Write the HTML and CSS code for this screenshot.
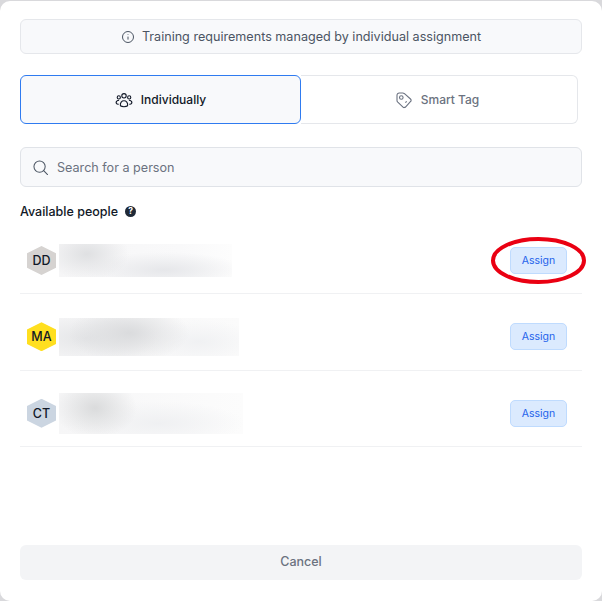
FILE: index.html
```html
<!DOCTYPE html>
<html lang="en">
<head>
    <meta charset="UTF-8">
    <meta name="viewport" content="width=device-width, initial-scale=1.0">
    <title>Assign Training</title>
    <link rel="stylesheet" href="styles.css">
</head>
<body>

<div class="dialog">
    <!-- Notice -->
    <div class="notice">
        <svg class="notice-icon" viewBox="0 0 14 14" fill="none" stroke="#4b5563" stroke-width="1">
            <circle cx="7" cy="7" r="5.5"/>
            <path d="M7 6.600v3M7 4.400v.6"/>
        </svg>
        <span>Training requirements managed by individual assignment</span>
    </div>

    <!-- Tabs -->
    <div class="tabs">
        <div class="tab tab-active">
            <svg class="tab-icon" viewBox="0 0 18 18" fill="none" stroke="#111827" stroke-width="1.100">
                <circle cx="9" cy="4.800" r="2.200"/>
                <circle cx="3.800" cy="6.400" r="1.600"/>
                <circle cx="14.200" cy="6.400" r="1.600"/>
                <path d="M5.400 14.800c-.5-3.400 1.400-5 3.600-5s4.100 1.600 3.600 5c-1.600 1.200-5.600 1.200-7.200 0z"/>
                <path d="M3.600 13.400c-1.500-.2-2.400-.8-2.500-1.500 0-1.400 1-2.500 3-2.600M14.400 13.400c1.500-.2 2.400-.8 2.500-1.500 0-1.400-1-2.500-3-2.600"/>
            </svg>
            <span>Individually</span>
        </div>
        <div class="tab tab-plain">
            <svg class="tab-icon" viewBox="0 0 18 18" fill="none" stroke="#6b7280" stroke-width="1.100">
                <path d="M2 4.200c0-1.200 1-2.200 2.200-2.200h3.500c.7 0 1.300.3 1.800.7l6 5.300c.8.700.8 1.800.1 2.500l-5.100 5.500c-.7.700-1.800.8-2.500.1l-5.200-4.900c-.5-.5-.8-1.100-.8-1.800z"/>
                <circle cx="6.300" cy="6.500" r="1.800"/>
                <path d="M10.400 11.700l1.300-1.300"/>
            </svg>
            <span>Smart Tag</span>
        </div>
    </div>

    <!-- Search -->
    <div class="search">
        <svg class="search-icon" viewBox="0 0 16 16" fill="none" stroke="#4b5563" stroke-width="1.100" stroke-linecap="round">
            <circle cx="7" cy="7" r="6"/>
            <path d="M11.400 11.400l4.100 4.100"/>
        </svg>
        <span>Search for a person</span>
    </div>

    <div class="section-title">
        <span>Available people</span>
        <span class="help">?</span>
    </div>

    <!-- People -->
    <div class="people">
        <div class="person">
            <div class="avatar avatar-grey">DD</div>
            <div class="blurred blurred-one"></div>
            <button class="assign">Assign</button>
        </div>
        <div class="person">
            <div class="avatar avatar-yellow">MA</div>
            <div class="blurred blurred-two"></div>
            <button class="assign">Assign</button>
        </div>
        <div class="person">
            <div class="avatar avatar-blue">CT</div>
            <div class="blurred blurred-three"></div>
            <button class="assign">Assign</button>
        </div>
    </div>

    <button class="cancel">Cancel</button>

    <!-- Red annotation around the first button -->
    <svg class="annotation" width="100" height="50" viewBox="0 0 100 50" fill="none">
        <ellipse cx="49.500" cy="23.500" rx="45.500" ry="21.500" stroke="#ea0012" stroke-width="4"/>
    </svg>
</div>

</body>
</html>
```

FILE: styles.css
```css
/* Page behind the dialog */
body {
    margin: 0;
    padding: 0;
    width: 602px;
    height: 601px;
    overflow: hidden;
    background: #d9d9dc;
    font-family: Inter, 'Noto Sans', sans-serif;
}

.dialog {
    position: relative;
    box-sizing: border-box;
    width: 602px;
    height: 600px;
    margin-top: 1px;
    padding: 18px 20px 0;
    background: #fff;
    border-radius: 10px;
    display: flex;
    flex-direction: column;
}

/* Notice */
.notice {
    box-sizing: border-box;
    height: 35px;
    display: flex;
    align-items: center;
    justify-content: center;
    gap: 7px;
    background: #f8f9fb;
    border: 1px solid #e5e7eb;
    border-radius: 6px;
    color: #4b5563;
    font-size: 12.600px;
}

.notice-icon {
    width: 14px;
    height: 14px;
}

/* Tabs */
.tabs {
    display: flex;
    width: 558px;
    height: 49px;
    margin-top: 21px;
}

.tab {
    box-sizing: border-box;
    flex: 1;
    display: flex;
    align-items: center;
    justify-content: center;
    gap: 8px;
    border: 1px solid #e5e7eb;
    border-left: none;
    border-radius: 0 6px 6px 0;
    color: #6b7280;
    font-size: 12px;
    font-weight: 500;
}

.tab-plain {
    padding-right: 4px;
}

.tab-active {
    flex: 0 0 281px;
    background: #f8f9fb;
    border: 1px solid #2f7bf0;
    border-radius: 6px;
    color: #111827;
}

.tab-icon {
    width: 18px;
    height: 18px;
}

/* Search */
.search {
    box-sizing: border-box;
    height: 40px;
    margin-top: 23px;
    padding-left: 12px;
    display: flex;
    align-items: center;
    gap: 9px;
    background: #f8f9fb;
    border: 1px solid #e0e3e8;
    border-radius: 6px;
    color: #6b7280;
    font-size: 12.600px;
}

.search-icon {
    width: 15px;
    height: 15px;
}

.section-title {
    display: flex;
    align-items: center;
    gap: 7px;
    height: 18px;
    margin-top: 15px;
    color: #111827;
    font-size: 12.500px;
    font-weight: 500;
}

.help {
    width: 11px;
    height: 11px;
    border-radius: 50%;
    background: #1f2937;
    color: #fff;
    font-size: 8.500px;
    font-weight: 700;
    line-height: 11px;
    text-align: center;
}

/* People list */
.people {
    margin-top: 9px;
}

.person {
    box-sizing: border-box;
    height: 76.500px;
    padding: 10px 15px 0 7px;
    display: flex;
    align-items: center;
    gap: 3px;
    border-bottom: 1px solid #f0f1f3;
}

.person:first-child {
    height: 65px;
    padding-top: 0;
    padding-bottom: 1px;
}

.avatar {
    flex: none;
    width: 29px;
    height: 29px;
    display: flex;
    align-items: center;
    justify-content: center;
    clip-path: polygon(50% 0, 100% 25%, 100% 75%, 50% 100%, 0 75%, 0 25%);
    color: #111827;
    font-size: 12.500px;
    font-weight: 500;
}

.avatar-grey {
    background: #d6d3d1;
}

.avatar-yellow {
    background: #ffdf1f;
}

.avatar-blue {
    background: #cbd5e1;
}

/* Names are blurred out in the original */
.blurred {
    height: 33px;
    background-color: #fdfdfd;
}

.blurred-one {
    width: 173px;
    background-image:
        radial-gradient(ellipse 42px 26px at 28px 10px, #dfe0e2, transparent),
        radial-gradient(ellipse 80px 18px at 105px 26px, #e6e7ea, transparent),
        linear-gradient(to right, #f6f6f7, #f9f9fa 70%, #fdfdfd);
}

.blurred-two {
    width: 180px;
    height: 38px;
    background-image:
        radial-gradient(ellipse 60px 30px at 70px 15px, #dadbdd, transparent),
        radial-gradient(ellipse 70px 26px at 28px 20px, #e4e5e7, transparent),
        radial-gradient(ellipse 60px 22px at 140px 24px, #f0f1f3, transparent),
        linear-gradient(to right, #f6f6f7, #fbfbfb);
}

.blurred-three {
    width: 184px;
    height: 41px;
    background-image:
        radial-gradient(ellipse 42px 30px at 36px 15px, #dadbdc, transparent),
        radial-gradient(ellipse 85px 22px at 100px 30px, #eff0f2, transparent),
        linear-gradient(to right, #f6f6f7, #fcfcfc);
}

.assign {
    flex: none;
    width: 57px;
    height: 27px;
    margin-left: auto;
    padding: 0;
    background: #dbeafe;
    border: 1px solid #bfdbfe;
    border-radius: 5px;
    color: #2563eb;
    font-family: inherit;
    font-size: 10.500px;
    font-weight: 400;
}

.cancel {
    height: 35px;
    margin-top: auto;
    margin-bottom: 21px;
    padding: 0 0 2px;
    background: #f3f4f6;
    border: none;
    border-radius: 6px;
    color: #6b7280;
    font-family: inherit;
    font-size: 12.500px;
    font-weight: 500;
}

.annotation {
    position: absolute;
    top: 236px;
    left: 489px;
}
```
